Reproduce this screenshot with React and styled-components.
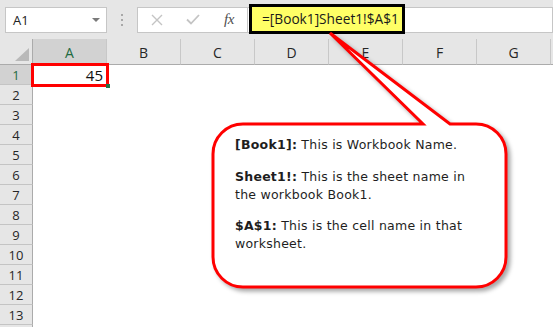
import React from 'react'
import styled, { createGlobalStyle } from 'styled-components'

const GlobalStyle = createGlobalStyle`
    html, body {
        margin: 0;
        padding: 0;
        overflow: hidden;
        background: #fff;
    }
    body {
        font-family: "Open Sans", "Noto Sans", sans-serif;
    }
`

const Page = styled.div`
    position: relative;
    width: 553px;
    height: 327px;
    overflow: hidden;
    background: #fff;
`

const Toolbar = styled.div`
    display: flex;
    align-items: center;
    height: 39px;
    padding-left: 5px;
    background: #e6e6e6;
    box-sizing: border-box;
`

const NameBox = styled.div`
    display: flex;
    align-items: center;
    justify-content: space-between;
    width: 102px;
    height: 26px;
    padding: 0 6px 0 7px;
    box-sizing: border-box;
    border: 1px solid #c6c6c6;
    background: #fff;
    color: #222;
    font-size: 13px;
`

const DropArrow = styled.span`
    width: 0;
    height: 0;
    border-left: 4px solid transparent;
    border-right: 4px solid transparent;
    border-top: 4px solid #7a7a7a;
`

const Grip = styled.div`
    display: flex;
    flex-direction: column;
    align-items: center;
    gap: 3px;
    width: 30px;
    span {
        width: 2px;
        height: 2px;
        background: #a8a8a8;
    }
`

const FxBox = styled.div`
    display: flex;
    align-items: center;
    width: 111px;
    height: 26px;
    padding-left: 1px;
    box-sizing: border-box;
    border: 1px solid #c6c6c6;
    background: #fff;
`

const IconSlot = styled.div`
    display: flex;
    align-items: center;
    justify-content: center;
    width: 36px;
    height: 100%;
`

const FxLabel = styled.span`
    font-family: "Liberation Serif", "DejaVu Serif", serif;
    font-style: italic;
    font-size: 15px;
    color: #505050;
    letter-spacing: -0.5px;
`

const FormulaInput = styled.div`
    display: flex;
    align-items: center;
    flex: 1;
    height: 26px;
    box-sizing: border-box;
    border: 1px solid #c6c6c6;
    border-left: none;
    background: #fff;
`

const Highlight = styled.div`
    display: flex;
    align-items: center;
    height: 30px;
    width: 156px;
    margin: -2px 0 0 1px;
    padding-left: 10px;
    box-sizing: border-box;
    border: 3px solid #000;
    background: #ffff66;
    color: #1a1a1a;
    font-size: 13.7px;
    white-space: nowrap;
`

const Sheet = styled.div`
    display: grid;
    grid-template-columns: 33px repeat(7, 74px) 1fr;
    grid-auto-rows: 20px;
    grid-template-rows: 26px;
`

const Corner = styled.div`
    position: relative;
    background: #e6e6e6;
    border-right: 1px solid #ababab;
    border-bottom: 1px solid #ababab;
    box-sizing: border-box;
    &::after {
        content: "";
        position: absolute;
        right: 3px;
        bottom: 3px;
        width: 0;
        height: 0;
        border-left: 14px solid transparent;
        border-bottom: 13px solid #b9b9b9;
    }
`

const ColHead = styled.div`
    display: flex;
    align-items: center;
    justify-content: center;
    box-sizing: border-box;
    background: ${p => (p.$active ? '#d2d2d2' : '#e6e6e6')};
    border-right: 1px solid #c8c8c8;
    border-bottom: 1px solid ${p => (p.$active ? '#217346' : '#ababab')};
    color: ${p => (p.$active ? '#1e6b41' : '#262626')};
    font-size: 14px;
    padding-top: 1px;
`

const RowHead = styled.div`
    display: flex;
    align-items: center;
    justify-content: center;
    box-sizing: border-box;
    background: ${p => (p.$active ? '#d2d2d2' : '#e6e6e6')};
    border-right: 1px solid ${p => (p.$active ? '#217346' : '#ababab')};
    border-bottom: 1px solid #c4c4c4;
    color: ${p => (p.$active ? '#1e6b41' : '#262626')};
    font-size: 13px;
`

const Cell = styled.div`
    position: relative;
    display: flex;
    align-items: center;
    justify-content: flex-end;
    padding-right: 4px;
    background: #fff;
    color: #111;
    font-size: 15px;
`

const Selection = styled.div`
    position: absolute;
    z-index: 2;
    left: -2px;
    top: -2px;
    right: -2px;
    bottom: -2px;
    border: 3px solid #ff0000;
    pointer-events: none;
    &::after {
        content: "";
        position: absolute;
        right: -4px;
        bottom: -4px;
        width: 4px;
        height: 4px;
        background: #217346;
    }
`

const Callout = styled.div`
    position: absolute;
    z-index: 3;
    left: 213px;
    top: 124px;
    width: 293px;
    height: 163px;
    padding: 12px 20px 0 22px;
    box-sizing: border-box;
    font-family: "DejaVu Sans", Verdana, sans-serif;
    font-size: 12.5px;
    letter-spacing: 0.25px;
    line-height: 18px;
    color: #1e1e1e;
`

const CalloutShape = styled.svg`
    position: absolute;
    left: 0;
    top: 0;
    overflow: visible;
    filter: drop-shadow(3px 3px 2px rgba(0, 0, 0, 0.35));
`

const Note = styled.p`
    position: relative;
    margin: 0 0 13.5px;
    white-space: nowrap;
    b {
        font-weight: bold;
    }
`

const COLUMNS = ['A', 'B', 'C', 'D', 'E', 'F', 'G']
const ROWS = Array.from({length: 14}, (_, i) => i + 1)

function App(){
    return (
        <Page>
            <GlobalStyle />
            <Toolbar>
                <NameBox>
                    <span>A1</span>
                    <DropArrow />
                </NameBox>
                <Grip><span /><span /><span /></Grip>
                <FxBox>
                    <IconSlot>
                        <svg width="12" height="12" viewBox="0 0 12 12">
                            <path d="M1 1 L11 11 M11 1 L1 11" stroke="#c4c4c4" strokeWidth="1.4" fill="none" />
                        </svg>
                    </IconSlot>
                    <IconSlot>
                        <svg width="14" height="11" viewBox="0 0 14 11">
                            <path d="M1 5.5 L5 9.5 L13 1" stroke="#c4c4c4" strokeWidth="1.8" fill="none" />
                        </svg>
                    </IconSlot>
                    <IconSlot>
                        <FxLabel>fx</FxLabel>
                    </IconSlot>
                </FxBox>
                <FormulaInput>
                    <Highlight>=[Book1]Sheet1!$A$1</Highlight>
                </FormulaInput>
            </Toolbar>

            <Sheet>
                <Corner />
                {COLUMNS.map(c => (
                    <ColHead key={c} $active={c === 'A'}>{c}</ColHead>
                ))}
                <ColHead />
                {ROWS.map(r => (
                    <React.Fragment key={r}>
                        <RowHead $active={r === 1}>{r < 14 ? r : ''}</RowHead>
                        {COLUMNS.map(c => (
                            <Cell key={c}>
                                {r === 1 && c === 'A' && (
                                    <>
                                        45
                                        <Selection />
                                    </>
                                )}
                            </Cell>
                        ))}
                        <Cell />
                    </React.Fragment>
                ))}
            </Sheet>

            <Callout>
                <CalloutShape width="293" height="163" viewBox="0 0 293 163">
                    <path
                        d="M30 0 H210 L117 -91 L237 0 H263 A30 30 0 0 1 293 30 V133 A30 30 0 0 1 263 163 H30 A30 30 0 0 1 0 133 V30 A30 30 0 0 1 30 0 Z"
                        fill="#fff"
                        stroke="#ff0000"
                        strokeWidth="3"
                        strokeLinejoin="miter"
                    />
                </CalloutShape>
                <Note><b>[Book1]:</b> This is Workbook Name.</Note>
                <Note><b>Sheet1!:</b> This is the sheet name in<br />the workbook Book1.</Note>
                <Note><b>$A$1:</b> This is the cell name in that<br />worksheet.</Note>
            </Callout>
        </Page>
    )
}

export default App
